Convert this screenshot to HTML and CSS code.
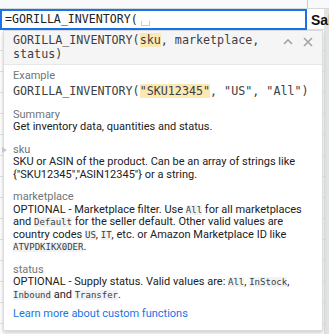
FILE: index.html
```html
<!DOCTYPE html>
<html>
<head>
    <title>Formula help</title>
    <link rel="stylesheet" href="styles.css">
</head>
<body>
    <div class="topbar"></div>

    <div class="editor-row">
        <div class="cell-editor">=GORILLA_INVENTORY(<span class="caret"></span></div>
        <div class="next-cell">Sales</div>
    </div>

    <!-- formula help popup -->
    <div class="help-popup">
        <div class="help-head">
            <div class="signature">GORILLA_INVENTORY(<span class="hl">sku</span>, marketplace, status)</div>
            <div class="head-icons">
                <svg width="12" height="12" viewBox="0 0 12 12"><path d="M2 8 L6 4 L10 8" fill="none" stroke="#a0a4a8" stroke-width="1.6"/></svg>
                <svg width="12" height="12" viewBox="0 0 12 12"><path d="M2 2 L10 10 M10 2 L2 10" fill="none" stroke="#a0a4a8" stroke-width="1.6"/></svg>
            </div>
        </div>

        <div class="help-body">
            <div class="section">
                <div class="label">Example</div>
                <div class="example">GORILLA_INVENTORY(<span class="hl">"SKU12345"</span>, "US", "All")</div>
            </div>

            <div class="section">
                <div class="label">Summary</div>
                <div class="text">Get inventory data, quantities and status.</div>
            </div>

            <div class="section current">
                <div class="label">sku</div>
                <div class="text">SKU or ASIN of the product. Can be an array of strings like {"SKU12345","ASIN12345"} or a string.</div>
            </div>

            <div class="section">
                <div class="label">marketplace</div>
                <div class="text">OPTIONAL - Marketplace filter. Use <code>All</code> for all marketplaces and <code>Default</code> for the seller default. Other valid values are country codes <code>US</code>, <code>IT</code>, etc. or Amazon Marketplace ID like <code>ATVPDKIKX0DER</code>.</div>
            </div>

            <div class="section tight">
                <div class="label">status</div>
                <div class="text">OPTIONAL - Supply status. Valid values are: <code>All</code>, <code>InStock</code>, <code>Inbound</code> and <code>Transfer</code>.</div>
            </div>

            <div class="section">
                <a class="learn" href="#">Learn more about custom functions</a>
            </div>
        </div>
    </div>
</body>
</html>
```

FILE: styles.css
```css
body {
    margin: 0;
    width: 329px;
    height: 334px;
    overflow: hidden;
    position: relative;
    font-family: Roboto, "Noto Sans", Arial, sans-serif;
    background-color: #fff;
    background-image:
        linear-gradient(to bottom, transparent 20px, #e2e3e3 20px, #e2e3e3 21px),
        linear-gradient(to right, transparent 324px, #e2e3e3 324px, #e2e3e3 325px);
    background-size: 100% 21px, 100% 100%;
    background-position: 0 9px, 0 0;
}

.topbar {
    height: 8px;
    background: #f8f9fa;
    border-bottom: 1px solid #d6d8da;
    background-image: linear-gradient(to right, transparent 307px, #c8cacc 307px, #c8cacc 308px, transparent 308px);
}

.editor-row {
    display: flex;
    align-items: center;
    height: 21px;
    overflow: hidden;
}

.cell-editor {
    flex: none;
    box-sizing: border-box;
    width: 307px;
    height: 21px;
    border: 2px solid #1a73e8;
    padding: 0 3px;
    font-family: "DejaVu Sans Mono", monospace;
    font-size: 11.6px;
    line-height: 17px;
    color: #202124;
    background: #fff;
}

.caret {
    display: inline-block;
    width: 7px;
    height: 4px;
    margin-left: 3px;
    border: 1px solid #ccc;
    border-top: none;
    vertical-align: -3px;
}

.next-cell {
    flex: none;
    padding-left: 4px;
    font-family: "Liberation Sans", Arial, sans-serif;
    font-weight: bold;
    font-size: 14px;
    color: #111;
    white-space: nowrap;
}

.help-popup {
    position: absolute;
    left: 3px;
    top: 30px;
    width: 320px;
    background: #fff;
    border: 1px solid #dadce0;
    box-shadow: 0 2px 4px rgba(0, 0, 0, 0.2);
    box-sizing: border-box;
}

.help-head {
    display: flex;
    justify-content: space-between;
    align-items: flex-start;
    background: #f5f5f5;
    border-bottom: 1px solid #e8e8e8;
    padding: 2px 8px 3px 9px;
}

.signature {
    font-family: "DejaVu Sans Mono", monospace;
    font-size: 11.7px;
    line-height: 14px;
    color: #3c4043;
    width: 250px;
}

.hl {
    background: #fce8b2;
}

.head-icons {
    display: flex;
    gap: 8px;
    padding-top: 3px;
}

.help-body {
    padding: 5px 6px 9px 9px;
}

.section {
    position: relative;
    margin-bottom: 10px;
}

.section.tight {
    margin-bottom: 7px;
}

.section:last-child {
    margin-bottom: 0;
}

.current::before {
    content: "";
    position: absolute;
    left: -11px;
    top: 3px;
    border-left: 5px solid #c4c6c8;
    border-top: 3.5px solid transparent;
    border-bottom: 3.5px solid transparent;
}

.label {
    font-size: 11px;
    line-height: 12.5px;
    color: #70757a;
}

.text {
    font-size: 11px;
    line-height: 12.5px;
    color: #202124;
}

.example {
    font-family: "DejaVu Sans Mono", monospace;
    font-size: 11.7px;
    line-height: 16px;
    color: #3c4043;
}

code {
    font-family: "DejaVu Sans Mono", monospace;
    font-size: 9px;
    line-height: 11px;
    background: #f1f3f4;
    color: #3c4043;
}

.learn {
    display: block;
    font-size: 11px;
    line-height: 12.5px;
    color: #1a73e8;
    text-decoration: none;
}
```
